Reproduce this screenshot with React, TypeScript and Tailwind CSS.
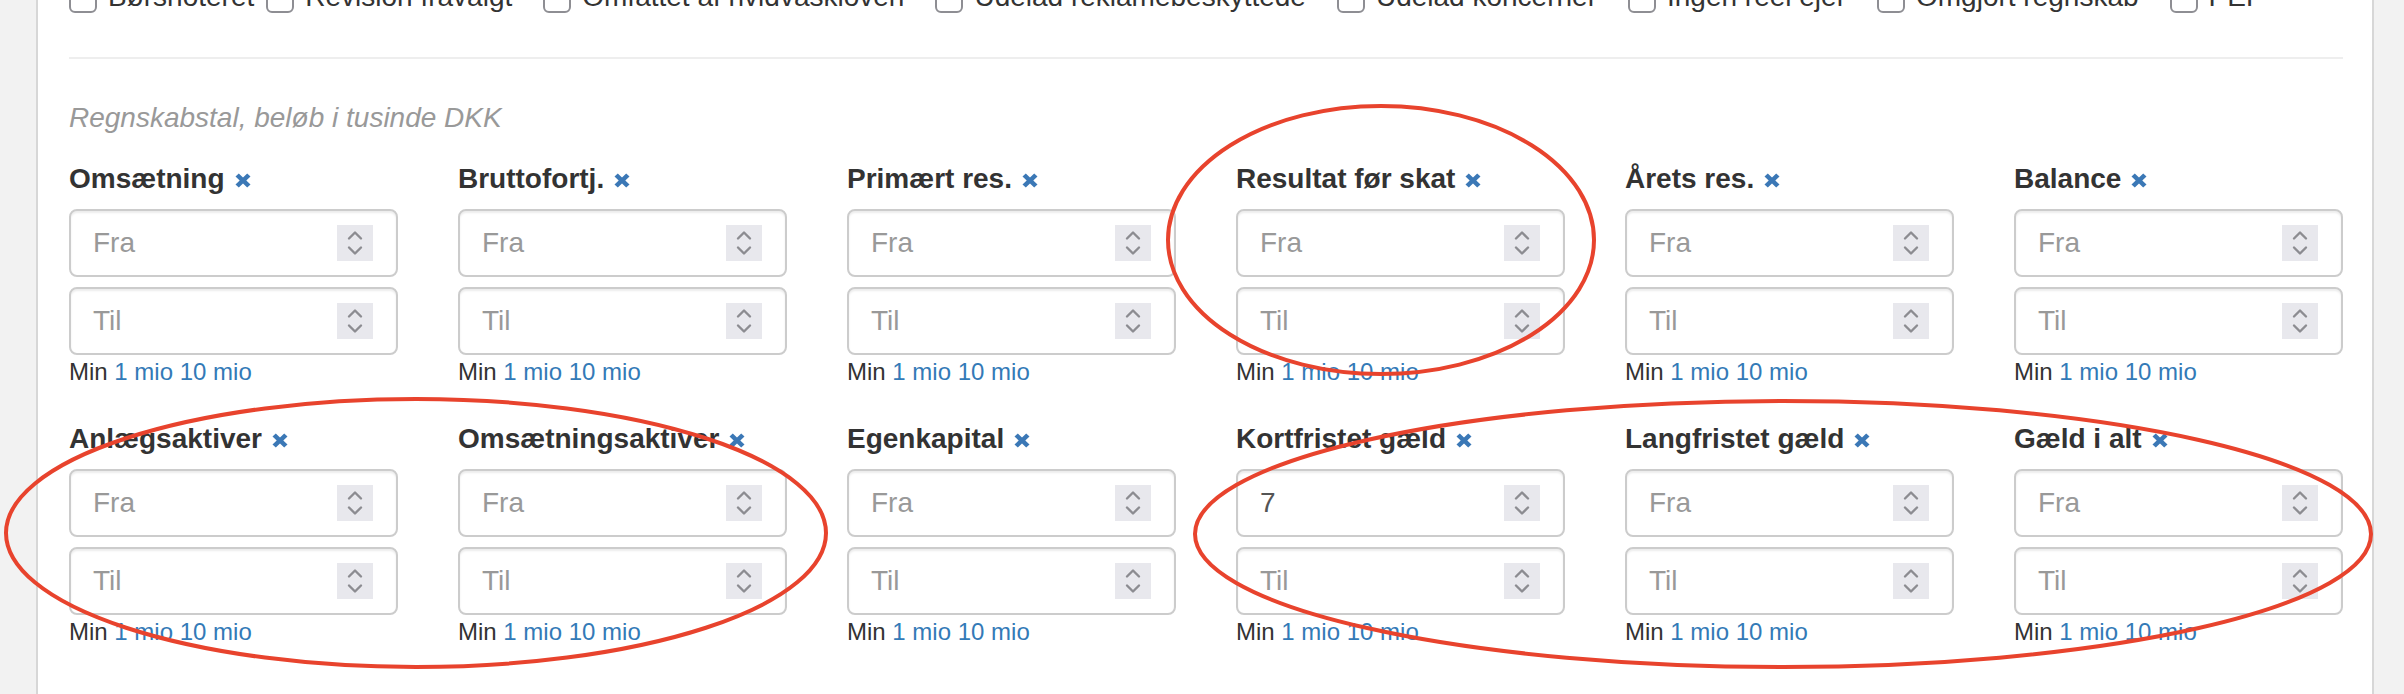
import React from 'react';

const checkboxes = [
  'Børsnoteret',
  'Revision fravalgt',
  'Omfattet af hvidvaskloven',
  'Udelad reklamebeskyttede',
  'Udelad koncerner',
  'Ingen reel ejer',
  'Omgjort regnskab',
  'PEP',
];

const fields: { label: string; from?: string }[] = [
  { label: 'Omsætning' },
  { label: 'Bruttofortj.' },
  { label: 'Primært res.' },
  { label: 'Resultat før skat' },
  { label: 'Årets res.' },
  { label: 'Balance' },
  { label: 'Anlægsaktiver' },
  { label: 'Omsætningsaktiver' },
  { label: 'Egenkapital' },
  { label: 'Kortfristet gæld', from: '7' },
  { label: 'Langfristet gæld' },
  { label: 'Gæld i alt' },
];

const RemoveIcon = () => (
  <svg
    className="inline-block align-baseline ml-[10px]"
    width="16"
    height="15"
    viewBox="0 0 16 16"
    preserveAspectRatio="none"
  >
    <path
      d="M0.5 3.8 L3.8 0.5 L8 4.7 L12.2 0.5 L15.5 3.8 L11.3 8 L15.5 12.2 L12.2 15.5 L8 11.3 L3.8 15.5 L0.5 12.2 L4.7 8 Z"
      fill="#3b78b6"
    />
  </svg>
);

const Spinner = () => (
  <div className="w-[36px] h-[36px] bg-[#e8e8ed] mr-[23px] shrink-0">
    <svg width="36" height="36" viewBox="0 0 36 36" fill="none">
      <path d="M12 13.5 L18 7.5 L24 13.5" stroke="#8c8c91" strokeWidth="2.4" strokeLinecap="round" strokeLinejoin="round" />
      <path d="M12 22.5 L18 28.5 L24 22.5" stroke="#8c8c91" strokeWidth="2.4" strokeLinecap="round" strokeLinejoin="round" />
    </svg>
  </div>
);

const NumberBox = ({ placeholder, value }: { placeholder: string; value?: string }) => (
  <div className="h-[68px] flex items-center border-2 border-[#cccccc] rounded-[8px] bg-white shadow-[inset_0_2px_2px_rgba(0,0,0,0.075)]">
    <span className={`flex-1 pl-[22px] text-[28px] ${value ? 'text-[#555555]' : 'text-[#999999]'}`}>
      {value ?? placeholder}
    </span>
    <Spinner />
  </div>
);

const RangeField = ({ label, from }: { label: string; from?: string }) => (
  <div className="flex flex-col">
    <div className="text-[28px] leading-[40px] font-bold text-[#333333] whitespace-nowrap mb-[10px]">
      {label}
      <RemoveIcon />
    </div>
    <NumberBox placeholder="Fra" value={from} />
    <div className="mt-[10px]">
      <NumberBox placeholder="Til" />
    </div>
    <div className="text-[24px] leading-[34px] text-[#333333] whitespace-nowrap">
      Min <span className="text-[#337ab7]">1 mio</span> <span className="text-[#337ab7]">10 mio</span>
    </div>
  </div>
);

export default function App() {
  return (
    <div className="relative w-[2404px] h-[694px] overflow-hidden flex bg-[#f2f2f2] font-['Liberation_Sans',Arial,sans-serif]">
      <div className="w-[36px] shrink-0" />
      <div className="flex-1 bg-white border-x-2 border-[#d7d7d7] pl-[31px] pr-[29px]">
        {/* checkbox row, scrolled partly out of view */}
        <div className="flex items-center -mt-[23px] h-[40px] text-[28px] leading-[40px] text-[#333333] whitespace-nowrap">
          {checkboxes.map((c, i) => (
            <div key={c} className={`flex items-center ${i === 0 ? '' : i === 1 ? 'ml-[12px]' : 'ml-[31px]'}`}>
              <span className="mt-[4px] w-[28px] h-[28px] rounded-[6px] border-2 border-[#8e8e93] bg-white" />
              <span className="ml-[11px]">{c}</span>
            </div>
          ))}
        </div>

        <div className="mt-[40px] h-[2px] bg-[#eeeeee]" />

        <div className="mt-[39px] text-[28px] leading-[40px] italic text-[#999999]">
          Regnskabstal, beløb i tusinde DKK
        </div>

        <div className="mt-[21px] grid grid-cols-6 gap-x-[60px] gap-y-[30px]">
          {fields.map((f) => (
            <RangeField key={f.label} label={f.label} from={f.from} />
          ))}
        </div>
      </div>
      <div className="w-[30px] shrink-0" />

      {/* red markup annotations */}
      <svg className="absolute inset-0 pointer-events-none" width="2404" height="694" viewBox="0 0 2404 694" fill="none">
        <ellipse cx="1381" cy="240" rx="213" ry="134" stroke="#e8432d" strokeWidth="4" />
        <ellipse cx="416" cy="533" rx="410" ry="134" stroke="#e8432d" strokeWidth="4" />
        <ellipse cx="1783" cy="534" rx="588" ry="133" stroke="#e8432d" strokeWidth="4" />
      </svg>
    </div>
  );
}
